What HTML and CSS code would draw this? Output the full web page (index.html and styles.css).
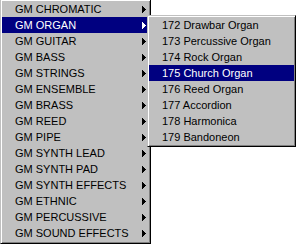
FILE: index.html
```html
<!DOCTYPE html>
<html lang="en">
<head>
    <meta charset="UTF-8">
    <title>GM Instruments Menu</title>
    <link rel="stylesheet" href="styles.css">
</head>
<body>
    <!-- Main menu -->
    <ul class="menu main-menu">
        <li class="item">GM CHROMATIC<svg class="arrow" width="4" height="7"><rect x="0" y="0" width="1" height="7"/><rect x="1" y="1" width="1" height="5"/><rect x="2" y="2" width="1" height="3"/><rect x="3" y="3" width="1" height="1"/></svg></li>
        <li class="item active">GM ORGAN<svg class="arrow" width="4" height="7"><rect x="0" y="0" width="1" height="7"/><rect x="1" y="1" width="1" height="5"/><rect x="2" y="2" width="1" height="3"/><rect x="3" y="3" width="1" height="1"/></svg></li>
        <li class="item">GM GUITAR<svg class="arrow" width="4" height="7"><rect x="0" y="0" width="1" height="7"/><rect x="1" y="1" width="1" height="5"/><rect x="2" y="2" width="1" height="3"/><rect x="3" y="3" width="1" height="1"/></svg></li>
        <li class="item">GM BASS<svg class="arrow" width="4" height="7"><rect x="0" y="0" width="1" height="7"/><rect x="1" y="1" width="1" height="5"/><rect x="2" y="2" width="1" height="3"/><rect x="3" y="3" width="1" height="1"/></svg></li>
        <li class="item">GM STRINGS<svg class="arrow" width="4" height="7"><rect x="0" y="0" width="1" height="7"/><rect x="1" y="1" width="1" height="5"/><rect x="2" y="2" width="1" height="3"/><rect x="3" y="3" width="1" height="1"/></svg></li>
        <li class="item">GM ENSEMBLE<svg class="arrow" width="4" height="7"><rect x="0" y="0" width="1" height="7"/><rect x="1" y="1" width="1" height="5"/><rect x="2" y="2" width="1" height="3"/><rect x="3" y="3" width="1" height="1"/></svg></li>
        <li class="item">GM BRASS<svg class="arrow" width="4" height="7"><rect x="0" y="0" width="1" height="7"/><rect x="1" y="1" width="1" height="5"/><rect x="2" y="2" width="1" height="3"/><rect x="3" y="3" width="1" height="1"/></svg></li>
        <li class="item">GM REED<svg class="arrow" width="4" height="7"><rect x="0" y="0" width="1" height="7"/><rect x="1" y="1" width="1" height="5"/><rect x="2" y="2" width="1" height="3"/><rect x="3" y="3" width="1" height="1"/></svg></li>
        <li class="item">GM PIPE<svg class="arrow" width="4" height="7"><rect x="0" y="0" width="1" height="7"/><rect x="1" y="1" width="1" height="5"/><rect x="2" y="2" width="1" height="3"/><rect x="3" y="3" width="1" height="1"/></svg></li>
        <li class="item">GM SYNTH LEAD<svg class="arrow" width="4" height="7"><rect x="0" y="0" width="1" height="7"/><rect x="1" y="1" width="1" height="5"/><rect x="2" y="2" width="1" height="3"/><rect x="3" y="3" width="1" height="1"/></svg></li>
        <li class="item">GM SYNTH PAD<svg class="arrow" width="4" height="7"><rect x="0" y="0" width="1" height="7"/><rect x="1" y="1" width="1" height="5"/><rect x="2" y="2" width="1" height="3"/><rect x="3" y="3" width="1" height="1"/></svg></li>
        <li class="item">GM SYNTH EFFECTS<svg class="arrow" width="4" height="7"><rect x="0" y="0" width="1" height="7"/><rect x="1" y="1" width="1" height="5"/><rect x="2" y="2" width="1" height="3"/><rect x="3" y="3" width="1" height="1"/></svg></li>
        <li class="item">GM ETHNIC<svg class="arrow" width="4" height="7"><rect x="0" y="0" width="1" height="7"/><rect x="1" y="1" width="1" height="5"/><rect x="2" y="2" width="1" height="3"/><rect x="3" y="3" width="1" height="1"/></svg></li>
        <li class="item">GM PERCUSSIVE<svg class="arrow" width="4" height="7"><rect x="0" y="0" width="1" height="7"/><rect x="1" y="1" width="1" height="5"/><rect x="2" y="2" width="1" height="3"/><rect x="3" y="3" width="1" height="1"/></svg></li>
        <li class="item">GM SOUND EFFECTS<svg class="arrow" width="4" height="7"><rect x="0" y="0" width="1" height="7"/><rect x="1" y="1" width="1" height="5"/><rect x="2" y="2" width="1" height="3"/><rect x="3" y="3" width="1" height="1"/></svg></li>
    </ul>

    <!-- Organ submenu (popup over the main menu) -->
    <ul class="menu sub-menu">
        <li class="item">172 Drawbar Organ</li>
        <li class="item">173 Percussive Organ</li>
        <li class="item">174 Rock Organ</li>
        <li class="item active">175 Church Organ</li>
        <li class="item">176 Reed Organ</li>
        <li class="item">177 Accordion</li>
        <li class="item">178 Harmonica</li>
        <li class="item">179 Bandoneon</li>
    </ul>
</body>
</html>
```

FILE: styles.css
```css
body {
    margin: 0;
    position: relative;
    height: 246px;
    overflow: hidden;
    background-color: #fff;
    font-family: "Liberation Sans", Arial, sans-serif;
    font-size: 11px;
    color: #000;
}

/* Win95 style popup menu */
.menu {
    list-style: none;
    margin: 0;
    padding: 1px;
    background-color: #c0c0c0;
    border: 1px solid;
    border-color: #c0c0c0 #000 #000 #c0c0c0;
    box-shadow: inset 1px 1px #fff, inset -1px -1px #808080;
}

.main-menu {
    width: 147px;
    margin-top: -1px;
    padding-bottom: 2px;
}

.sub-menu {
    position: absolute;
    top: 15px;
    left: 147px;
    width: 145px;
}

.item {
    display: flex;
    align-items: center;
    justify-content: space-between;
    height: 16px;
    line-height: 16px;
    padding-left: 13px;
    white-space: nowrap;
}

.item.active {
    background-color: #000080;
    color: #fff;
}

.arrow {
    fill: currentColor;
    margin-right: 3px;
    shape-rendering: crispEdges;
}
```
